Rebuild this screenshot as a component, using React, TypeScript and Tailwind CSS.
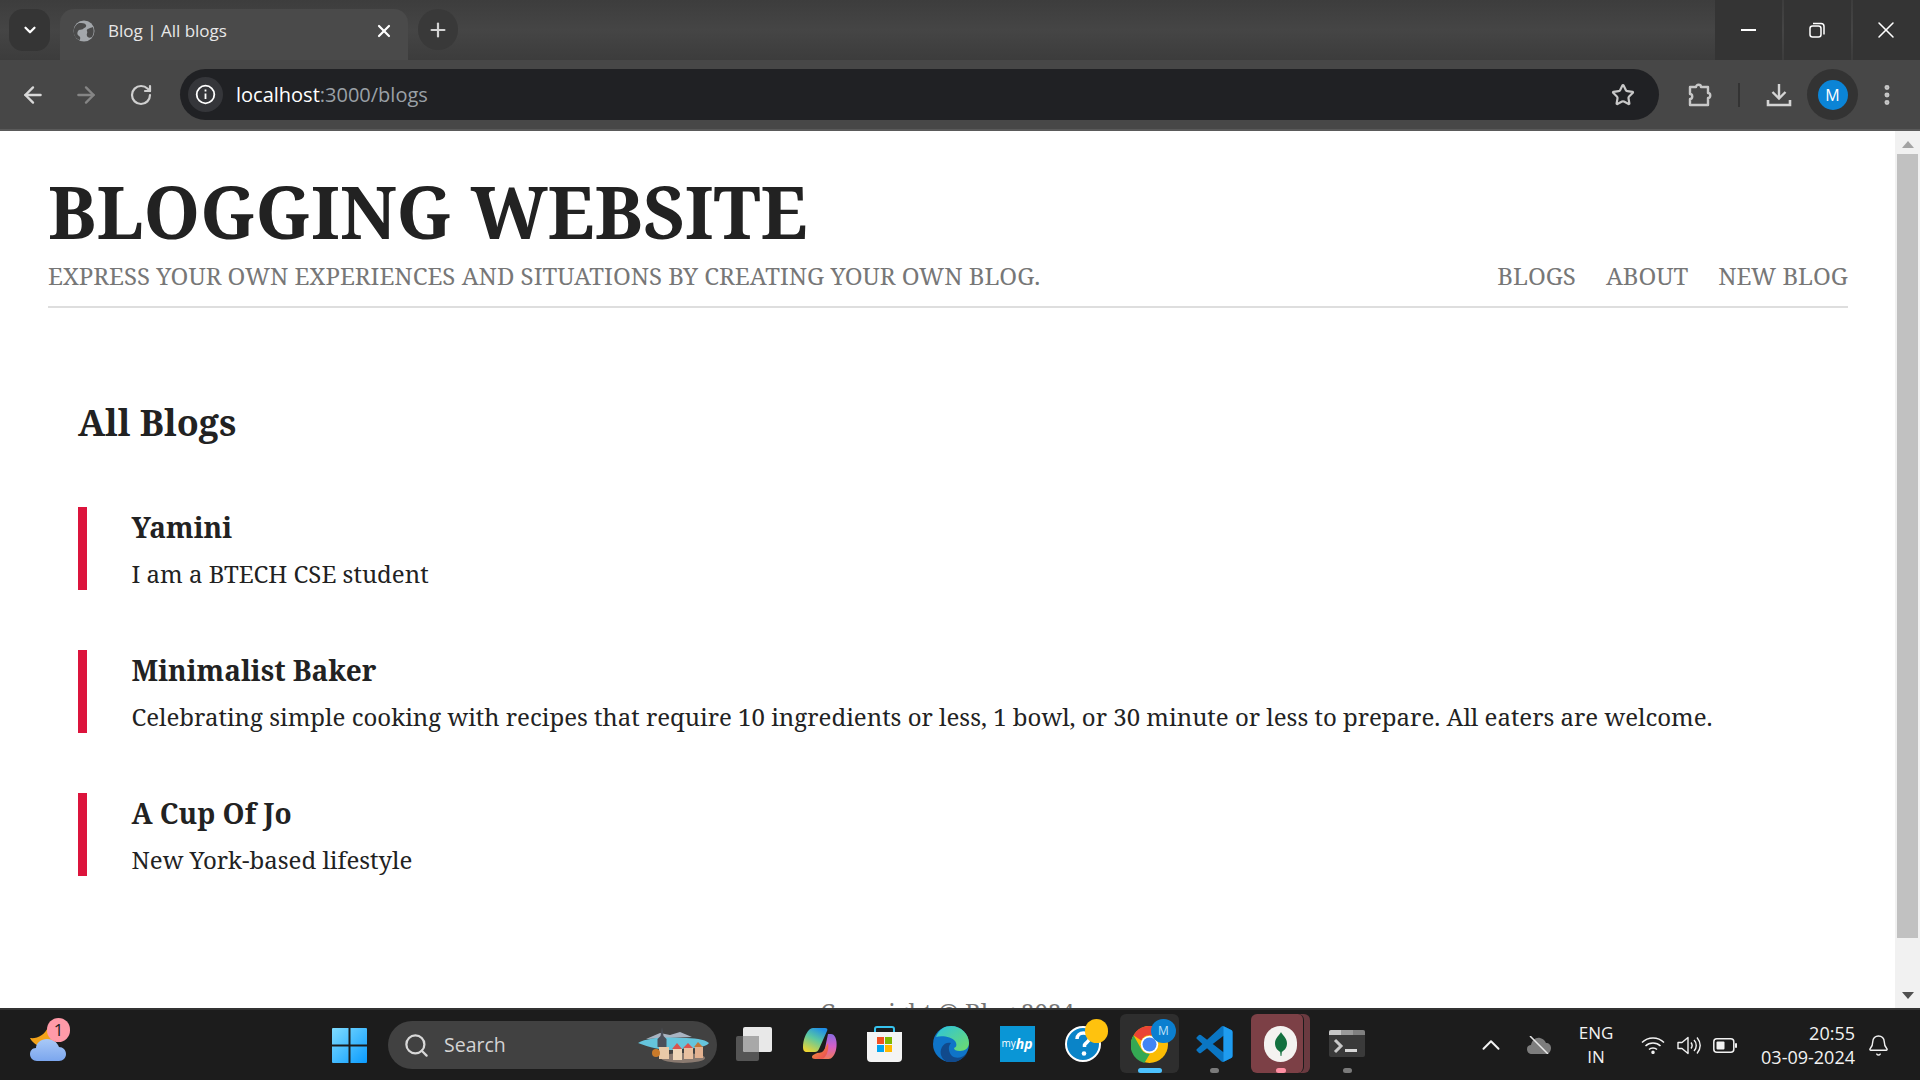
import { ArrowLeft, ArrowRight, RotateCw, Plus, X, ChevronDown, Star, MoreVertical, Search, ChevronUp, Bell } from "lucide-react";

const serif = "font-['Noto_Serif','DejaVu_Serif','Liberation_Serif',serif]";
const ui = "font-['Open_Sans','Noto_Sans',sans-serif]";

const blogs = [
  { title: "Yamini", body: "I am a BTECH CSE student" },
  { title: "Minimalist Baker", body: "Celebrating simple cooking with recipes that require 10 ingredients or less, 1 bowl, or 30 minute or less to prepare. All eaters are welcome." },
  { title: "A Cup Of Jo", body: "New York-based lifestyle" },
];

function Globe() {
  return (
    <svg width="22" height="22" viewBox="0 0 22 22">
      <circle cx="11" cy="11" r="10.5" fill="#a3a7ab" />
      <path d="M6 3c3 0 6 0 7 2s-2 3-3 4-4 0-5 2-1 4 1 5 1 3 1 4C3 19 0 15 .8 10 1.3 7 3 4.500 6 3zM20 7c1 3 1 7-1 10-2 1-4 1-5-1s1-3 0-5 3-3 6-4z" fill="#4a4a4a" />
    </svg>
  );
}

function Puzzle() {
  return (
    <svg width="26" height="26" viewBox="0 0 26 26" fill="none" stroke="#c8c8c8" strokeWidth="2.400">
      <path d="M3 5h6c0-3 5-3 5 0h7v6c3 0 3 5 0 5v7H3v-6c3 0 3-5 0-5z" strokeLinejoin="round" />
    </svg>
  );
}

function DownloadIcon() {
  return (
    <svg width="26" height="26" viewBox="0 0 26 26" fill="none" stroke="#d4d4d4" strokeWidth="2.400">
      <path d="M13 2v14M6.500 10l6.500 6.500 6.500-6.500" />
      <path d="M2 18v5h22v-5" strokeWidth="2.600" />
    </svg>
  );
}

function ChromeBar() {
  return (
    <div className={`shrink-0 ${ui}`}>
      <div className="flex h-[60px] bg-gradient-to-b from-[#3d3d3d] via-[#454545] to-[#3c3c3c]">
        <div className="ml-[9px] mt-[9px] flex h-[42px] w-[41px] items-center justify-center rounded-[14px] bg-[#353535]">
          <ChevronDown size={18} color="#fff" strokeWidth={3} />
        </div>
        <div className="ml-[10px] mt-[9px] flex h-[51px] w-[348px] items-center rounded-t-[14px] bg-[#4a4a4a] pb-[8px] pl-[13px] pr-[14px]">
          <Globe />
          <span className="ml-[13px] flex-1 text-[17px] text-[#e8e8e8]">Blog | All blogs</span>
          <X size={20} color="#fff" strokeWidth={2.600} />
        </div>
        <div className="ml-[10px] mt-[9px] flex h-[41px] w-[40px] items-center justify-center rounded-full bg-[#393939]">
          <Plus size={22} color="#d4d4d4" strokeWidth={2.400} />
        </div>
        <div className="ml-auto flex h-[60px]">
          <div className="flex w-[67px] items-center justify-center bg-[#343434]"><div className="h-[2px] w-[15px] bg-white" /></div>
          <div className="ml-[2px] flex w-[67px] items-center justify-center bg-[#343434] pr-[2px]">
            <svg width="16" height="16" viewBox="0 0 16 16" fill="none" stroke="#fff" strokeWidth="1.500">
              <rect x="1" y="4" width="11" height="11" rx="2.500" />
              <path d="M4 1.500h8a3 3 0 0 1 3 3v8" />
            </svg>
          </div>
          <div className="ml-[2px] flex w-[67px] items-center justify-center bg-[#343434] pr-[1px]">
            <X size={28} color="#fff" strokeWidth={1.300} />
          </div>
        </div>
      </div>
      <div className="flex h-[69px] items-center bg-[#474747]">
        <ArrowLeft className="ml-[20px]" size={26} color="#d8d8d8" strokeWidth={2.200} />
        <ArrowRight className="ml-[27px]" size={26} color="#858585" strokeWidth={2.200} />
        <RotateCw className="ml-[30px]" size={24} color="#d0d0d0" strokeWidth={2.200} />
        <div className="ml-[27px] flex h-[51px] w-[1479px] items-center rounded-full bg-[#202124] pl-[8px] pr-[24px]">
          <div className="flex h-[35px] w-[35px] items-center justify-center rounded-full bg-[#35363a]">
            <svg width="21" height="21" viewBox="0 0 21 21" fill="none" stroke="#fff" strokeWidth="1.800">
              <circle cx="10.500" cy="10.500" r="8.800" />
              <path d="M10.500 9.500v5.500M10.500 5.500v2" />
            </svg>
          </div>
          <span className="ml-[13px] text-[20px]"><span className="text-white">localhost</span><span className="text-[#9aa0a6]">:3000/blogs</span></span>
          <Star className="ml-auto" size={24} color="#c8c8c8" strokeWidth={2.200} />
        </div>
        <div className="ml-[28px]"><Puzzle /></div>
        <div className="ml-[25px] h-[24px] w-[2px] bg-[#333]" />
        <div className="ml-[26px]"><DownloadIcon /></div>
        <div className="ml-[15px] flex h-[51px] w-[51px] items-center justify-center rounded-full bg-[#333]">
          <div className="flex h-[30px] w-[30px] items-center justify-center rounded-full bg-[#0b84d6] text-[16px] text-white">M</div>
        </div>
        <MoreVertical className="ml-[16px]" size={26} color="#c8c8c8" strokeWidth={2.600} />
      </div>
      <div className="h-[2px] bg-[#5a5a5a]" />
    </div>
  );
}

function Scrollbar() {
  return (
    <div className="flex w-[25px] shrink-0 flex-col items-center bg-[#f1f1f1]">
      <div className="mt-[10px] h-0 w-0 border-x-[6px] border-b-[7px] border-x-transparent border-b-[#a3a3a3]" />
      <div className="mt-[6px] h-[784px] w-[21px] bg-[#c1c1c1]" />
      <div className="mt-[54px] h-0 w-0 border-x-[6px] border-t-[7px] border-x-transparent border-t-[#505050]" />
    </div>
  );
}

function Page() {
  return (
    <div className="min-w-0 flex-1 overflow-hidden bg-white">
      <header className="ml-[48px] mr-[47px] flex h-[177px] flex-col border-b-2 border-[#dedede]">
        <h1 className={`mt-[44px] text-[72px] font-bold leading-[72px] text-[#222] ${serif}`}>BLOGGING WEBSITE</h1>
        <div className={`mt-[11px] flex justify-between text-[24px] leading-[36px] text-[#777] ${serif}`}>
          <p>EXPRESS YOUR OWN EXPERIENCES AND SITUATIONS BY CREATING YOUR OWN BLOG.</p>
          <nav className="flex gap-[30px]">
            <a>BLOGS</a>
            <a>ABOUT</a>
            <a>NEW BLOG</a>
          </nav>
        </div>
      </header>
      <main className={`ml-[78px] text-[#222] ${serif}`}>
        <h2 className="mt-[91px] text-[36px] font-bold leading-[48px]">All Blogs</h2>
        <div className="mt-[60px] flex flex-col gap-[60px]">
          {blogs.map((b) => (
            <article key={b.title} className="h-[83px] border-l-[9px] border-[#dc143c] pl-[44.500px]">
              <h3 className="text-[28px] font-bold leading-[40px]">{b.title}</h3>
              <p className="mt-[11px] text-[24px] leading-[32px]">{b.body}</p>
            </article>
          ))}
        </div>
      </main>
      <footer className={`mt-[118px] text-center text-[24px] leading-[36px] text-[#777] ${serif}`}>Copyright © Blog 2024</footer>
    </div>
  );
}

function TaskIcon({ children, width, active, dot }: { children: React.ReactNode; width: number; active?: boolean; dot?: string }) {
  return (
    <div style={{ width }} className={`relative flex h-[59px] shrink-0 items-center justify-center rounded-[6px] ${active ? "bg-[#2e2e2e]" : ""}`}>
      {children}
      {dot && <span style={{ backgroundColor: dot, width: active ? 24 : 9 }} className="absolute bottom-0 h-[5px] rounded-full" />}
    </div>
  );
}

function Weather() {
  return (
    <div className="relative h-[43px] w-[36px]">
      <svg width="36" height="43" viewBox="0 0 36 43">
        <defs>
          <linearGradient id="cloud" x1="0" y1="0" x2="0" y2="1">
            <stop offset="0" stopColor="#a9c9f7" />
            <stop offset="1" stopColor="#7ba6ee" />
          </linearGradient>
        </defs>
        <path d="M18 9c-1 8 2 12 8 15l-8 6C10 30 3 26 0 20c7 1 15-3 18-11z" fill="#f2a31b" />
        <path d="M7 43c-4 0-7-3-7-7 0-3 2-6 6-6 0-5 5-9 11-9 6 0 10 3 12 8 4 0 7 3 7 7s-3 7-7 7z" fill="url(#cloud)" />
      </svg>
      <span className={`absolute -right-[4px] top-0 flex h-[24px] w-[23px] items-center justify-center rounded-full bg-[#ff9aa8] text-[17px] text-[#222] ${ui}`}>1</span>
    </div>
  );
}

function WindowsLogo() {
  return (
    <svg width="35" height="35" viewBox="0 0 35 35">
      <defs>
        <linearGradient id="win" x1="0" y1="0" x2="1" y2="1">
          <stop offset="0" stopColor="#7fdcff" />
          <stop offset="1" stopColor="#0a9bff" />
        </linearGradient>
      </defs>
      <path d="M0 1a1 1 0 0 1 1-1h15.500v16.500H0zM18.500 0H34a1 1 0 0 1 1 1v15.500H18.500zM0 18.500h16.500V35H1a1 1 0 0 1-1-1zM18.500 18.500H35V34a1 1 0 0 1-1 1H18.500z" fill="url(#win)" />
    </svg>
  );
}

function SearchArt() {
  return (
    <svg width="71" height="36" viewBox="0 0 71 36">
      <path d="M8 12l14-6 10 2 10-3 12 5z" fill="#a9b4c2" />
      <path d="M0 16c10-6 30-6 45-5 10 0 22 1 26 5-3 4-14 6-24 5-10 4-30 2-47-5z" fill="#65c4dc" />
      <ellipse cx="45" cy="31" rx="22" ry="5" fill="#8a7a70" />
      <path d="M24 0l1.500 9 3 3v8h-9v-8l3-3z" fill="#4b4f5a" />
      <rect x="21" y="20" width="10" height="12" fill="#e8c9a8" />
      <rect x="35" y="22" width="9" height="11" fill="#eed5b8" />
      <rect x="46" y="21" width="9" height="11" fill="#e8c0a0" />
      <rect x="57" y="20" width="8" height="11" fill="#e2b190" />
      <path d="M34 22l5-6 5 6zM45 21l5-5 5 5z" fill="#d9534f" />
      <path d="M56 20l4-5 5 5z" fill="#c0763a" />
      <circle cx="18" cy="26" r="4" fill="#c97a2a" />
    </svg>
  );
}

function TaskView() {
  return (
    <svg width="36" height="34" viewBox="0 0 36 34">
      <rect x="0" y="9" width="23" height="25" rx="2" fill="#555" />
      <rect x="7" y="0" width="29" height="25" rx="2" fill="#e8e8e8" />
      <path d="M7 9h16v16H9a2 2 0 0 1-2-2z" fill="#a8a8a8" />
    </svg>
  );
}

function Copilot() {
  return (
    <svg width="34" height="31" viewBox="0 0 34 31">
      <defs>
        <linearGradient id="cop1" x1="0.700" y1="0" x2="0.200" y2="1">
          <stop offset="0" stopColor="#1f8fe8" />
          <stop offset=".45" stopColor="#5cc8a0" />
          <stop offset="1" stopColor="#f0d530" />
        </linearGradient>
        <linearGradient id="cop2" x1="0.500" y1="0" x2="0.500" y2="1">
          <stop offset="0" stopColor="#8a6be0" />
          <stop offset=".5" stopColor="#d45fc8" />
          <stop offset="1" stopColor="#f07a5a" />
        </linearGradient>
        <linearGradient id="cop3" x1="0" y1="0" x2="1" y2="1">
          <stop offset="0" stopColor="#f5a030" />
          <stop offset="1" stopColor="#e8455a" />
        </linearGradient>
      </defs>
      <path d="M10 0h12c2 0 3 1 2 3l-8 18c-1 2-2 3-4 3H4c-3 0-4-2-4-5 0-7 3-14 6-17 1-1 2-2 4-2z" fill="url(#cop1)" />
      <path d="M25 6h3c3 0 5 3 5.500 8 .5 6-1 12-4 15-1 1-2 2-4 2H12l6-4 3-2z" fill="url(#cop2)" />
      <path d="M14 25c4 0 6-1 7-3l4-7c1 4 0 10-3 14-1 1-2 2-4 2h-6c-2 0-3-1-3-2 0-2 3-3 5-4z" fill="url(#cop3)" />
    </svg>
  );
}

function Store() {
  return (
    <svg width="35" height="36" viewBox="0 0 35 36">
      <path d="M8 7V3a2 2 0 0 1 2-2h15a2 2 0 0 1 2 2v4" fill="none" stroke="#36c3ee" strokeWidth="2" />
      <path d="M0 6h35v26a4 4 0 0 1-4 4H4a4 4 0 0 1-4-4z" fill="#f4f4f4" />
      <rect x="10" y="11" width="7" height="7" fill="#f25022" />
      <rect x="18" y="11" width="7" height="7" fill="#7fba00" />
      <rect x="10" y="19" width="7" height="7" fill="#00a4ef" />
      <rect x="18" y="19" width="7" height="7" fill="#ffb900" />
    </svg>
  );
}

function Edge() {
  return (
    <svg width="36" height="36" viewBox="0 0 36 36">
      <defs>
        <linearGradient id="edge1" x1="0" y1="0" x2="1" y2="1">
          <stop offset="0" stopColor="#2cc3de" />
          <stop offset="1" stopColor="#6fdc6a" />
        </linearGradient>
      </defs>
      <circle cx="18" cy="18" r="18" fill="#0f74c8" />
      <path d="M3 11C6 3 12 0 18 0c10 0 18 8 18 17 0 5-4 8-9 8-4 0-6-1-6-3 3-1 3-4 1-7-3-4-13-6-19-4z" fill="url(#edge1)" />
      <path d="M14 36c-6-3-8-10-5-15 2-4 6-5 9-4-3 3-3 9 1 13 4 3 11 2 15-3-3 6-12 11-20 9z" fill="#114a8c" />
    </svg>
  );
}

function MyHp() {
  return (
    <div className="flex h-[36px] w-[35px] items-center justify-center bg-[#0a96d6] text-white">
      <span className={`text-[10px] ${ui}`}>my</span>
      <span className={`text-[14px] font-bold italic ${ui}`}>hp</span>
    </div>
  );
}

function Help() {
  return (
    <div className="relative h-[36px] w-[36px]">
      <svg width="36" height="36" viewBox="0 0 36 36">
        <circle cx="18" cy="18" r="17" fill="#0a84c8" stroke="#fff" strokeWidth="2" />
        <path d="M12 13c0-4 3-6 6.500-6s6 2.500 6 5.500-4 4-5 6.500v2" fill="none" stroke="#fff" strokeWidth="3.500" />
        <circle cx="19" cy="27.500" r="2.300" fill="#fff" />
      </svg>
      <span className="absolute -right-[7px] -top-[7px] h-[24px] w-[23px] rounded-full bg-[#ffc20e]" />
    </div>
  );
}

function ChromeLogo() {
  return (
    <div className="relative h-[36px] w-[37px]">
      <svg width="37" height="37" viewBox="0 0 36 36">
        <circle cx="18" cy="18" r="18" fill="#fbbc04" />
        <path d="M2.400 9A18 18 0 0 1 33.600 9H18a9 9 0 0 0-8 5z" fill="#ea4335" />
        <path d="M2.400 9l8 14a9 9 0 0 0 8 4L13 36A18 18 0 0 1 2.400 9z" fill="#34a853" />
        <circle cx="18" cy="18" r="8.500" fill="#fff" />
        <circle cx="18" cy="18" r="6.800" fill="#4285f4" />
      </svg>
      <span className={`absolute -right-[8px] -top-[7px] flex h-[24px] w-[25px] items-center justify-center rounded-full bg-[#0b7fd0] text-[12px] text-[#bfe3fb] ${ui}`}>M</span>
    </div>
  );
}

function VsCode() {
  return (
    <svg width="37" height="36" viewBox="0 0 24 24">
      <path d="M23.150 2.587L18.210.21a1.494 1.494 0 0 0-1.705.29l-9.460 8.630-4.120-3.128a.999.999 0 0 0-1.276.057L.327 7.261A1 1 0 0 0 .326 8.740L3.899 12 .326 15.260a1 1 0 0 0 .001 1.479L1.650 17.940a.999.999 0 0 0 1.276.057l4.120-3.128 9.460 8.630a1.492 1.492 0 0 0 1.704.29l4.942-2.377A1.500 1.500 0 0 0 24 20.060V3.939a1.500 1.500 0 0 0-.850-1.352zm-5.146 14.861L10.826 12l7.178-5.448v10.896z" fill="#0a76c4" />
      <path d="M18 .1l5.150 2.487A1.500 1.500 0 0 1 24 3.939V20.060a1.500 1.500 0 0 1-.850 1.352L18 23.900z" fill="#1f9cf0" />
    </svg>
  );
}

function Mongo() {
  return (
    <div className="flex h-[36px] w-[33px] items-center justify-center rounded-full bg-[#f4f2f0]">
      <svg width="12" height="28" viewBox="0 0 14 28">
        <path d="M7 0c1 3 7 7 7 13s-4 9-6 10l-.5 5h-1L6 23c-2-1-6-4-6-10S6 3 7 0z" fill="#13703f" />
      </svg>
    </div>
  );
}

function Terminal() {
  return (
    <svg width="36" height="27" viewBox="0 0 36 27">
      <rect width="36" height="27" rx="2" fill="#3a3a3a" />
      <path d="M0 2a2 2 0 0 1 2-2h10v5H0z" fill="#c8c8c8" />
      <rect x="12" y="0" width="12" height="5" fill="#9a9a9a" />
      <path d="M24 0h10a2 2 0 0 1 2 2v3H24z" fill="#808080" />
      <path d="M6 10l6 6-6 6" fill="none" stroke="#c8c8c8" strokeWidth="3" />
      <rect x="16" y="19" width="12" height="3" fill="#d8d8d8" />
    </svg>
  );
}

function Tray() {
  return (
    <div className={`ml-auto flex h-full items-center text-[#f2f2f2] ${ui}`}>
      <ChevronUp size={30} color="#f2f2f2" strokeWidth={1.600} />
      <svg className="ml-[21px]" width="24" height="18" viewBox="0 0 24 18">
        <path d="M5 18c-3 0-5-2-5-5s2-4 4-4c1-5 5-8 9-7s5 3 6 5c3 0 5 2 5 5s-2 6-5 6z" fill="#7d7d7d" />
        <path d="M3 0l18 18" stroke="#e8e8e8" strokeWidth="1.500" />
      </svg>
      <div className="ml-[23px] flex w-[44px] flex-col items-center text-[17px] leading-[24px]">
        <span>ENG</span>
        <span>IN</span>
      </div>
      <svg className="ml-[23px]" width="24" height="18" viewBox="0 0 24 18" fill="none" stroke="#f2f2f2" strokeWidth="1.500">
        <path d="M1 6.500c6-6 16-6 22 0M4.500 10c4-4 11-4 15 0M8 13.500c2-2 6-2 8 0" />
        <circle cx="12" cy="16.300" r="1" fill="#f2f2f2" />
      </svg>
      <svg className="ml-[12px]" width="24" height="19" viewBox="0 0 24 19" fill="none" stroke="#f2f2f2" strokeWidth="1.400">
        <path d="M1 6.500h4l6-5v16l-6-5H1z" strokeLinejoin="round" />
        <path d="M14 6.500c1.500 2 1.500 4 0 6M17 4c3 3 3 8 0 11M20 1.500c4 5 4 11 0 16" />
      </svg>
      <svg className="ml-[12px]" width="24" height="15" viewBox="0 0 24 15">
        <rect x=".8" y=".8" width="20" height="13.400" rx="3" fill="none" stroke="#f2f2f2" strokeWidth="1.500" />
        <rect x="3.500" y="3.500" width="8" height="8" rx="1" fill="#f2f2f2" />
        <rect x="22" y="5" width="2" height="5" rx="1" fill="#f2f2f2" />
      </svg>
      <div className="ml-[22px] flex w-[96px] flex-col items-end text-[18px] leading-[24px]">
        <span>20:55</span>
        <span>03-09-2024</span>
      </div>
      <Bell className="ml-[12px] mr-[30px]" size={23} color="#f2f2f2" strokeWidth={1.500} />
    </div>
  );
}

function Taskbar() {
  return (
    <div className="flex h-[72px] shrink-0 items-center border-t-2 border-[#333] bg-[#1c1c1c]">
      <div className="mb-[11px] ml-[30px]"><Weather /></div>
      <div className="ml-[266px]"><WindowsLogo /></div>
      <div className="ml-[21px] flex h-[48px] w-[329px] items-center rounded-full bg-[#414141] pl-[15px] pr-[8px]">
        <Search size={27} color="#d8d8d8" strokeWidth={2} />
        <span className={`ml-[14px] text-[19.500px] text-[#d4d4d4] ${ui}`}>Search</span>
        <div className="ml-auto"><SearchArt /></div>
      </div>
      <div className="mb-[3px] ml-[1px] flex items-center">
        <TaskIcon width={72}><TaskView /></TaskIcon>
        <TaskIcon width={60}><Copilot /></TaskIcon>
        <TaskIcon width={68}><Store /></TaskIcon>
        <TaskIcon width={66}><Edge /></TaskIcon>
        <TaskIcon width={66}><MyHp /></TaskIcon>
        <TaskIcon width={66}><Help /></TaskIcon>
        <div className="ml-[4px]"><TaskIcon width={59} active dot="#4cc2ff"><ChromeLogo /></TaskIcon></div>
        <div className="ml-[6px]"><TaskIcon width={59} dot="#7a7a7a"><VsCode /></TaskIcon></div>
        <div className="relative ml-[7px] flex">
          <div className="absolute -right-[6px] top-0 h-[59px] w-[20px] rounded-[6px] bg-[#6a3a40]" />
          <div className="relative flex h-[59px] w-[53px] items-center justify-center rounded-[6px] border-r border-[#1c1c1c] bg-[#7c4046] pl-[7px]">
            <Mongo />
            <span className="absolute bottom-0 left-[25px] h-[5px] w-[10px] rounded-full bg-[#ff8fa3]" />
          </div>
        </div>
        <div className="ml-[25px]"><TaskIcon width={36} dot="#7a7a7a"><Terminal /></TaskIcon></div>
      </div>
      <Tray />
    </div>
  );
}

export default function App() {
  return (
    <div className="flex h-screen w-full flex-col overflow-hidden">
      <ChromeBar />
      <div className="flex min-h-0 flex-1">
        <Page />
        <Scrollbar />
      </div>
      <Taskbar />
    </div>
  );
}
